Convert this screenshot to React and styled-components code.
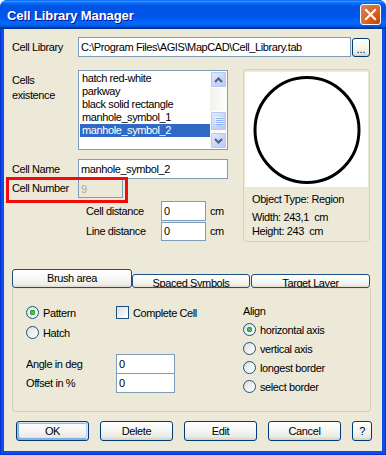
import React from 'react';
import styled, { createGlobalStyle } from 'styled-components';

const Global = createGlobalStyle`
  html, body { margin: 0; padding: 0; background: #fff; }
  body { font-family: "Liberation Sans", Arial, sans-serif; font-size: 11px; letter-spacing: -0.4px; color: #000; }
  * { box-sizing: border-box; }
`;

const Window = styled.div`
  width: 386px;
  height: 455px;
  display: flex;
  flex-direction: column;
  border-radius: 7px 7px 0 0;
  overflow: hidden;
  background: #0A4BDF;
`;

const TitleBar = styled.div`
  height: 29px;
  flex: none;
  display: flex;
  align-items: center;
  justify-content: space-between;
  padding: 2px 5px 0 7px;
  background: linear-gradient(180deg, #0058EE 0%, #3593FF 4%, #288EFF 6%, #127DFF 8%, #036FFC 10%, #0262EE 14%, #0057E5 20%, #0054E3 24%, #0055EB 56%, #005BF5 66%, #026AFE 76%, #0062EF 86%, #0052D6 92%, #0040AB 94%, #003092 100%);
`;

const Title = styled.div`
  font-family: "Liberation Sans", Arial, sans-serif;
  font-weight: bold;
  font-size: 13px;
  color: #fff;
  text-shadow: 1px 1px #0F1089;
  letter-spacing: -0.1px;
`;

const CloseButton = styled.div`
  width: 21px;
  height: 21px;
  margin-top: -2px;
  border: 1px solid #fff;
  border-radius: 3px;
  display: flex;
  align-items: center;
  justify-content: center;
  background: radial-gradient(circle at 90% 90%, #CC4600 0%, #DC6527 55%, #CD7546 70%, #E97A56 100%);
`;

const Frame = styled.div`
  flex: 1;
  display: flex;
  padding: 0 4px 4px 4px;
  background: #0B4FE3;
  box-shadow: inset 1px 0 #0831D9, inset -1px 0 #0831D9, inset 0 -1px #0831D9;
`;

const Content = styled.div`
  flex: 1;
  background: #ECE9D8;
  padding: 8px 0 0 8px;
  display: flex;
  flex-direction: column;
`;

const Row = styled.div`
  display: flex;
  align-items: center;
  height: ${p => p.$h || 20}px;
  margin-top: ${p => p.$mt || 0}px;
  position: relative;
`;

const Label = styled.div`
  width: ${p => p.$w || 66}px;
  flex: none;
  white-space: nowrap;
  line-height: 13px;
`;

const TextBox = styled.div`
  width: ${p => p.$w}px;
  height: ${p => p.$h || 20}px;
  flex: none;
  border: 1px solid #7F9DB9;
  background: ${p => (p.$disabled ? '#ECE9D8' : '#fff')};
  color: ${p => (p.$disabled ? '#ACA899' : '#000')};
  padding: 0 2px;
  display: flex;
  align-items: center;
  white-space: nowrap;
  overflow: hidden;
`;

const BrowseButton = styled.div`
  width: 18px;
  height: 19px;
  margin-left: 1px;
  margin-top: 1px;
  border: 1px solid #003C74;
  border-radius: 3px;
  background: linear-gradient(180deg, #FFFFFF 0%, #F4F4F0 50%, #ECEBE6 80%, #D6D0C5 100%);
  display: flex;
  align-items: flex-end;
  justify-content: center;
  padding-bottom: 3px;
  line-height: 8px;
  letter-spacing: 0;
`;

const Middle = styled.div`
  display: flex;
  align-items: flex-start;
  margin-top: 12px;
`;

const LeftCol = styled.div`
  width: 216px;
  display: flex;
  flex-direction: column;
  padding-top: 1px;
`;

const ListRow = styled.div`
  display: flex;
  align-items: flex-start;
`;

const ListLabel = styled.div`
  width: 66px;
  padding-top: 3px;
  line-height: 15px;
`;

const ListBox = styled.div`
  width: 150px;
  height: 80px;
  border: 1px solid #7F9DB9;
  background: #fff;
  display: flex;
`;

const ListItems = styled.div`
  flex: 1;
  padding-top: 1px;
  display: flex;
  flex-direction: column;
`;

const ListItem = styled.div`
  height: 13px;
  line-height: 13px;
  margin-left: 1px;
  padding-left: 2px;
  white-space: nowrap;
  background: ${p => (p.$selected ? '#316AC5' : 'transparent')};
  color: ${p => (p.$selected ? '#fff' : '#000')};
`;

const ScrollBar = styled.div`
  width: 17px;
  display: flex;
  flex-direction: column;
  background: linear-gradient(90deg, #F3F1EC 0%, #FEFEFB 100%);
`;

const ScrollBtn = styled.div`
  width: 17px;
  height: 17px;
  border: 1px solid #fff;
  border-radius: 2px;
  background: linear-gradient(135deg, #E6EEFC 0%, #C6D3F7 60%, #B9CAF3 100%);
  box-shadow: inset 0 0 0 1px #B4C8F6;
  display: flex;
  align-items: center;
  justify-content: center;
`;

const ScrollTrack = styled.div`
  flex: 1;
  display: flex;
  flex-direction: column;
  justify-content: flex-end;
  padding-bottom: 1px;
`;

const Thumb = styled(ScrollBtn)`
  height: 20px;
`;

const DistLabel = styled.div`
  width: 149px;
  padding-left: 74px;
  flex: none;
  white-space: nowrap;
`;

const Unit = styled.div`
  margin-left: 4px;
`;

const Highlight = styled.div`
  position: absolute;
  left: -6px;
  top: -2px;
  width: 122px;
  height: 26px;
  border: 3px solid #F20B0B;
  pointer-events: none;
`;

const Preview = styled.div`
  margin-left: 15px;
  width: 127px;
  height: 173px;
  border: 1px solid #D5D2C2;
  border-radius: 4px;
  padding: 2px 1px 0 1px;
  display: flex;
  flex-direction: column;
`;

const PreviewCanvas = styled.div`
  height: 115px;
  background: #fff;
  display: flex;
  align-items: center;
  justify-content: center;
`;

const PreviewInfo = styled.div`
  padding: 5px 0 0 7px;
  line-height: 14px;
`;

const InfoLine = styled.div`
  margin-top: ${p => p.$mt || 0}px;
`;

const Tabs = styled.div`
  display: flex;
  align-items: flex-end;
  margin-top: 27px;
  height: 19px;
`;

const Tab = styled.div`
  width: ${p => p.$w}px;
  height: ${p => (p.$active ? 19 : 14)}px;
  margin-left: ${p => p.$ml || 0}px;
  border: 1px solid #1C4F86;
  border-radius: 3px;
  background: linear-gradient(180deg, #FFFFFF 0%, #F7F7F4 50%, #EEEDE7 85%, #DCD7CB 100%);
  text-align: center;
  line-height: 13px;
  padding-top: ${p => (p.$active ? 2 : 2)}px;
  overflow: hidden;
  white-space: nowrap;
`;

const TabPanel = styled.div`
  width: 359px;
  height: 124px;
  border: 1px solid #D3D0C1;
  border-top-color: #E4E1D3;
  border-radius: 0 0 4px 4px;
  display: flex;
  padding: 17px 0 0 13px;
`;

const PanelLeft = styled.div`
  width: 217px;
  display: flex;
  flex-direction: column;
`;

const PanelRow = styled.div`
  display: flex;
  align-items: center;
  height: ${p => p.$h || 13}px;
  margin-top: ${p => p.$mt || 0}px;
`;

const OptionGroup = styled.div`
  width: ${p => (p.$w ? `${p.$w}px` : 'auto')};
  display: flex;
  align-items: center;
  gap: 4px;
  white-space: nowrap;
`;

const Radio = styled.span`
  width: 13px;
  height: 13px;
  flex: none;
  border-radius: 50%;
  border: 1px solid #1C5180;
  background: ${p =>
    p.$checked
      ? 'radial-gradient(circle at 50% 50%, #5CDC58 0, #21A121 2.4px, transparent 3px), linear-gradient(135deg, #DCDCD7 0%, #FFFFFF 90%)'
      : 'linear-gradient(135deg, #DCDCD7 0%, #FFFFFF 90%)'};
`;

const CheckBox = styled.span`
  width: 13px;
  height: 13px;
  flex: none;
  border: 1px solid #1C5180;
  background: linear-gradient(135deg, #DCDCD7 0%, #FFFFFF 90%);
`;

const PanelRight = styled.div`
  display: flex;
  flex-direction: column;
  margin-top: -2px;
`;

const AlignTitle = styled.div`
  line-height: 14px;
  height: 14px;
  margin-bottom: 2px;
`;

const AlignRow = styled.div`
  display: flex;
  align-items: center;
  gap: 4px;
  height: 19px;
  white-space: nowrap;
`;

const ButtonBar = styled.div`
  display: flex;
  gap: 11px;
  margin-top: 9px;
  padding-left: 4px;
`;

const Button = styled.div`
  width: ${p => p.$w || 73}px;
  height: 20px;
  border: 1px solid #003C74;
  border-radius: 3px;
  background: linear-gradient(180deg, #FFFFFF 0%, #F4F4F0 50%, #ECEBE6 80%, #D6D0C5 100%);
  display: flex;
  align-items: center;
  justify-content: center;
  box-shadow: ${p =>
    p.$default
      ? 'inset -1px 1px #CEE7FF, inset 1px 2px #98B8EA, inset -2px 2px #BCD4F6, inset 1px -1px #89ADE4, inset 2px -2px #89ADE4'
      : 'none'};
`;

const Arrow = ({ up }) => (
  <svg width="9" height="6" viewBox="0 0 9 6">
    <path
      d={up ? 'M1 5 L4.5 1.5 L8 5' : 'M1 1 L4.5 4.5 L8 1'}
      fill="none"
      stroke="#4D6185"
      strokeWidth="2"
    />
  </svg>
);

const Grip = () => (
  <svg width="8" height="8" viewBox="0 0 8 8">
    {[0.5, 2.5, 4.5, 6.5].map(y => (
      <line key={y} x1="0" y1={y} x2="8" y2={y} stroke="#EEF4FE" strokeWidth="1" />
    ))}
    {[1.5, 3.5, 5.5, 7.5].map(y => (
      <line key={y} x1="1" y1={y} x2="8" y2={y} stroke="#8CB0F8" strokeWidth="1" />
    ))}
  </svg>
);

const items = ['hatch red-white', 'parkway', 'black solid rectangle', 'manhole_symbol_1', 'manhole_symbol_2'];

export default function App() {
  return (
    <>
      <Global />
      <Window>
        <TitleBar>
          <Title>Cell Library Manager</Title>
          <CloseButton>
            <svg width="13" height="13" viewBox="0 0 13 13">
              <path d="M2 2 L11 11 M11 2 L2 11" stroke="#fff" strokeWidth="2.2" strokeLinecap="square" />
            </svg>
          </CloseButton>
        </TitleBar>
        <Frame>
          <Content>
            <Row>
              <Label>Cell Library</Label>
              <TextBox $w={273}>C:\Program Files\AGIS\MapCAD\Cell_Library.tab</TextBox>
              <BrowseButton>...</BrowseButton>
            </Row>

            <Middle>
              <LeftCol>
                <ListRow>
                  <ListLabel>
                    Cells
                    <br />
                    existence
                  </ListLabel>
                  <ListBox>
                    <ListItems>
                      {items.map((it, i) => (
                        <ListItem key={it} $selected={i === items.length - 1}>
                          {it}
                        </ListItem>
                      ))}
                    </ListItems>
                    <ScrollBar>
                      <ScrollBtn>
                        <Arrow up />
                      </ScrollBtn>
                      <ScrollTrack>
                        <Thumb>
                          <Grip />
                        </Thumb>
                      </ScrollTrack>
                      <ScrollBtn>
                        <Arrow />
                      </ScrollBtn>
                    </ScrollBar>
                  </ListBox>
                </ListRow>

                <Row $mt={9}>
                  <Label>Cell Name</Label>
                  <TextBox $w={150}>manhole_symbol_2</TextBox>
                </Row>
                <Row $h={19}>
                  <Label>Cell Number</Label>
                  <TextBox $w={45} $h={19} $disabled>
                    9
                  </TextBox>
                  <Highlight />
                </Row>

                <Row $mt={3}>
                  <DistLabel>Cell distance</DistLabel>
                  <TextBox $w={45}>0</TextBox>
                  <Unit>cm</Unit>
                </Row>
                <Row>
                  <DistLabel>Line distance</DistLabel>
                  <TextBox $w={45} $h={19}>0</TextBox>
                  <Unit>cm</Unit>
                </Row>
              </LeftCol>

              <Preview>
                <PreviewCanvas>
                  <svg width="112" height="112" viewBox="0 0 112 112">
                    <ellipse cx="56" cy="56" rx="52" ry="52.5" fill="none" stroke="#000" strokeWidth="3" />
                  </svg>
                </PreviewCanvas>
                <PreviewInfo>
                  <InfoLine>Object Type: Region</InfoLine>
                  <InfoLine $mt={4}>Width: 243,1&nbsp; cm</InfoLine>
                  <InfoLine>Height: 243&nbsp; cm</InfoLine>
                </PreviewInfo>
              </Preview>
            </Middle>

            <Tabs>
              <Tab $w={120} $active>
                Brush area
              </Tab>
              <Tab $w={118}>Spaced Symbols</Tab>
              <Tab $w={119} $ml={1}>
                Target Layer
              </Tab>
            </Tabs>
            <TabPanel>
              <PanelLeft>
                <PanelRow>
                  <OptionGroup $w={90}>
                    <Radio $checked />
                    Pattern
                  </OptionGroup>
                  <OptionGroup>
                    <CheckBox />
                    Complete Cell
                  </OptionGroup>
                </PanelRow>
                <PanelRow $mt={7}>
                  <OptionGroup>
                    <Radio />
                    Hatch
                  </OptionGroup>
                </PanelRow>
                <PanelRow $mt={15} $h={20}>
                  <Label $w={90}>Angle in deg</Label>
                  <TextBox $w={59}>0</TextBox>
                </PanelRow>
                <PanelRow $mt={-1} $h={20}>
                  <Label $w={90}>Offset in %</Label>
                  <TextBox $w={59}>0</TextBox>
                </PanelRow>
              </PanelLeft>
              <PanelRight>
                <AlignTitle>Align</AlignTitle>
                <AlignRow>
                  <Radio $checked />
                  horizontal axis
                </AlignRow>
                <AlignRow>
                  <Radio />
                  vertical axis
                </AlignRow>
                <AlignRow>
                  <Radio />
                  longest border
                </AlignRow>
                <AlignRow>
                  <Radio />
                  select border
                </AlignRow>
              </PanelRight>
            </TabPanel>

            <ButtonBar>
              <Button $default>OK</Button>
              <Button>Delete</Button>
              <Button>Edit</Button>
              <Button>Cancel</Button>
              <Button $w={20}>?</Button>
            </ButtonBar>
          </Content>
        </Frame>
      </Window>
    </>
  );
}
